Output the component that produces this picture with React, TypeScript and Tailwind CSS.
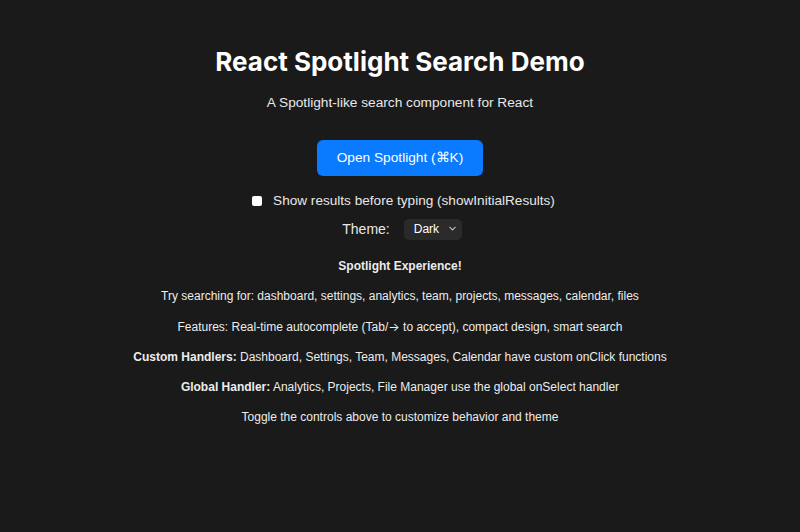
import { useState } from 'react';

export default function App() {
  const [showInitial, setShowInitial] = useState(false);
  const [theme, setTheme] = useState('dark');

  return (
    <div className="min-h-screen bg-[#1a1a1a] text-white font-['Liberation_Sans',Arial,sans-serif] flex flex-col items-center pt-[44px]">
      <h1 className="text-[26px] font-bold leading-[36px] font-['Inter',sans-serif]">React Spotlight Search Demo</h1>
      <p className="mt-[13px] text-[13.7px] leading-[20px] text-[#e8e8e8]">A Spotlight-like search component for React</p>

      <button className="mt-[27px] h-[36px] px-[20px] rounded-[6px] bg-[#0a7aff] text-[13.7px] text-white">
        Open Spotlight (⌘K)
      </button>

      <label className="mt-[15px] ml-[7px] flex items-center gap-[11px] text-[13.6px] text-[#e8e8e8]">
        <input
          type="checkbox"
          checked={showInitial}
          onChange={(e) => setShowInitial(e.target.checked)}
          className="w-[10px] h-[10px] appearance-none bg-white rounded-[2px]"
        />
        Show results before typing (showInitialResults)
      </label>

      <div className="mt-[7px] ml-[4px] flex items-center gap-[14px] text-[14px] text-[#e8e8e8]">
        <span>Theme:</span>
        <div className="relative">
          <select
            value={theme}
            onChange={(e) => setTheme(e.target.value)}
            className="appearance-none h-[21px] w-[58px] pl-[10px] rounded-[5px] bg-[#2a2a2a] text-[12px] text-white"
          >
            <option value="dark">Dark</option>
            <option value="light">Light</option>
          </select>
          <svg className="absolute right-[6px] top-[8px] w-[7px] h-[5px] pointer-events-none" viewBox="0 0 7 5" fill="none" stroke="#bbb" strokeWidth="1.2">
            <path d="M0.5 0.8 L3.5 3.8 L6.5 0.8" />
          </svg>
        </div>
      </div>

      <div className="mt-[19px] flex flex-col items-center gap-[15px] text-[12px] leading-[15px] text-[#ececec]">
        <p className="font-bold">Spotlight Experience!</p>
        <p>Try searching for: dashboard, settings, analytics, team, projects, messages, calendar, files</p>
        <p>Features: Real-time autocomplete (Tab/<span className="font-['Inter',sans-serif]">→</span> to accept), compact design, smart search</p>
        <p><strong>Custom Handlers:</strong> Dashboard, Settings, Team, Messages, Calendar have custom onClick functions</p>
        <p><strong>Global Handler:</strong> Analytics, Projects, File Manager use the global onSelect handler</p>
        <p>Toggle the controls above to customize behavior and theme</p>
      </div>
    </div>
  );
}
